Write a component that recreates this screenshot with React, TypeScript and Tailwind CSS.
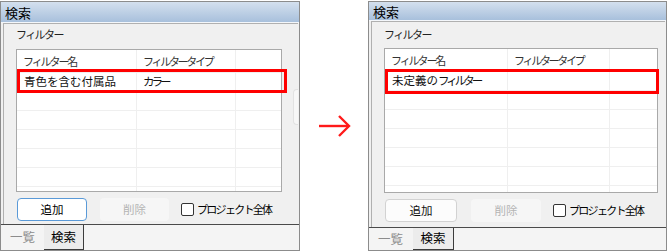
import React from "react";

type Cfg = {
  w: number;
  titleH: number;
  tableW: number;
  tableH: number;
  tableMt: number;
  cols: [number, number];
  rows: { a: React.ReactNode; b: string }[];
  btnTop: number;
  btnAdd: { w: number; focused: boolean };
  delGap: number;
  delW: number;
  cbGap: number;
  stripH: number;
  tabs: { left: number; selL: number; selW: number };
  scrollStub: boolean;
  labelTop: number;
};

const F = "font-['Noto_Sans_CJK_JP','Noto_Sans',sans-serif]";

function Panel({ c }: { c: Cfg }) {
  return (
    <div
      className={`relative flex h-[250px] flex-col border border-[#8c8c8c] bg-[#f0f0f0] ${F}`}
      style={{ width: c.w }}
    >
      <div
        className="flex shrink-0 items-center bg-gradient-to-b from-[#d4e0ee] to-[#a8c0dc] pl-[4px] text-[13px] leading-none text-[#000]"
        style={{ height: c.titleH }}
      >
        検索
      </div>
      <div className="h-px shrink-0 bg-[#f4f7fb]" />
      <div className="ml-[2px] mr-[1px] flex min-h-0 flex-1 flex-col border-l border-t border-[#b0b0b0] pl-[12px]">
        <div
          className="text-[11px] leading-[16px] tracking-[-1.6px] text-[#222]"
          style={{ marginTop: c.labelTop }}
        >
          フィルター
        </div>
        <div className="flex">
          <div
            className="relative flex flex-col overflow-hidden border border-[#a9a9a9] bg-white text-[11.5px] leading-none"
            style={{ width: c.tableW, height: c.tableH, marginTop: c.tableMt }}
          >
            <div className="flex h-[23px] shrink-0 border-b border-[#efefef] text-[11px] text-[#333]">
              <div className="flex items-center border-r border-[#efefef] pl-[6px] tracking-[-2.1px]" style={{ width: c.cols[0] }}>
                フィルター名
              </div>
              <div className="flex items-center border-r border-[#efefef] pl-[6px] tracking-[-2.3px]" style={{ width: c.cols[1] }}>
                フィルタータイプ
              </div>
              <div className="flex-1" />
            </div>
            {c.rows.map((r, i) => (
              <div key={i} className="flex h-[19px] shrink-0 border-b border-[#efefef] text-[#111]">
                <div className="flex items-center border-r border-[#efefef] pl-[7px]" style={{ width: c.cols[0] }}>
                  {r.a}
                </div>
                <div className="flex items-center border-r border-[#efefef] pl-[6px] tracking-[-3px]" style={{ width: c.cols[1] }}>
                  {r.b}
                </div>
                <div className="flex-1" />
              </div>
            ))}
          </div>
          {c.scrollStub && (
            <div className="ml-[11px] mt-[47px] h-[36px] w-[5px] rounded-l-[4px] border border-r-0 border-[#e2e2e2] bg-[#f7f7f7]" />
          )}
        </div>
        <div className="flex items-center text-[11.5px] leading-none" style={{ marginTop: c.btnTop }}>
          <div
            className={`ml-[1px] flex h-[23px] items-center justify-center rounded-[4px] ${
              c.btnAdd.focused
                ? "border-[1.5px] border-[#5a9ad8] bg-white text-[#000]"
                : "border border-[#d2d2d2] bg-[#fcfcfc] text-[#111]"
            }`}
            style={{ width: c.btnAdd.w }}
          >
            追加
          </div>
          <div
            className="flex h-[23px] items-center justify-center rounded-[4px] bg-[#f6f6f6] text-[#b4b4b4]"
            style={{ width: c.delW, marginLeft: c.delGap }}
          >
            削除
          </div>
          <div className="flex items-center text-[#000]" style={{ marginLeft: c.cbGap }}>
            <div className="h-[13px] w-[13px] rounded-[2px] border border-[#333] bg-white" />
            <span className="ml-[3px] text-[11px] tracking-[-1.7px]">プロジェクト全体</span>
          </div>
        </div>
        <div className="flex-1" />
      </div>
      <div className="h-px shrink-0 bg-[#4a4a4a]" />
      <div
        className="flex shrink-0 bg-[#f4f4f4] text-[12.5px] leading-none"
        style={{ height: c.stripH }}
      >
        <div className="flex items-center text-[#8c8c8c]" style={{ marginLeft: c.tabs.left }}>
          一覧
        </div>
        <div
          className="flex items-center justify-center border-b border-r border-[#3c3c3c] bg-[#ececec] text-[#000]"
          style={{ marginLeft: c.tabs.selL, width: c.tabs.selW }}
        >
          検索
        </div>
      </div>
    </div>
  );
}

const empty = { a: "", b: "" };

export default function App() {
  const left: Cfg = {
    w: 300,
    titleH: 20,
    tableW: 268,
    tableH: 143,
    tableMt: 7,
    cols: [120, 99],
    rows: [{ a: "青色を含む付属品", b: "カラー" }, empty, empty, empty, empty, empty, empty],
    btnTop: 6,
    btnAdd: { w: 70, focused: true },
    delGap: 13,
    delW: 69,
    cbGap: 12,
    stripH: 25,
    tabs: { left: 9, selL: 9, selW: 40 },
    scrollStub: true,
    labelTop: 2,
  };
  const right: Cfg = {
    w: 299,
    titleH: 18,
    tableW: 274,
    tableH: 145,
    tableMt: 6,
    cols: [123, 102],
    rows: [
      {
        a: (
          <>
            未定義の<span className="tracking-[-3px]">フィルター</span>
          </>
        ),
        b: "",
      },
      empty,
      empty,
      empty,
      empty,
      empty,
      empty,
    ],
    btnTop: 6,
    btnAdd: { w: 72, focused: false },
    delGap: 14,
    delW: 70,
    cbGap: 12,
    stripH: 22,
    tabs: { left: 9, selL: 10, selW: 41 },
    scrollStub: false,
    labelTop: 4,
  };
  return (
    <div className="relative flex h-[252px] w-[668px] bg-white pt-px">
      <Panel c={left} />
      <div className="flex w-[68px] shrink-0 justify-center">
        <svg width="34" height="24" viewBox="0 0 34 24" className="mt-[113px] ml-[2px]" fill="none">
          <path d="M1 12 H31" stroke="#ff1a1a" strokeWidth="2.4" />
          <path d="M21 2 L31 12 L21 22" stroke="#ff1a1a" strokeWidth="2.4" />
        </svg>
      </div>
      <Panel c={right} />
      <div className="pointer-events-none absolute left-[17px] top-[69px] h-[24px] w-[270px] border-[3px] border-[#ff0000]" />
      <div className="pointer-events-none absolute left-[385px] top-[69px] h-[25px] w-[274px] border-[3px] border-[#ff0000]" />
    </div>
  );
}
